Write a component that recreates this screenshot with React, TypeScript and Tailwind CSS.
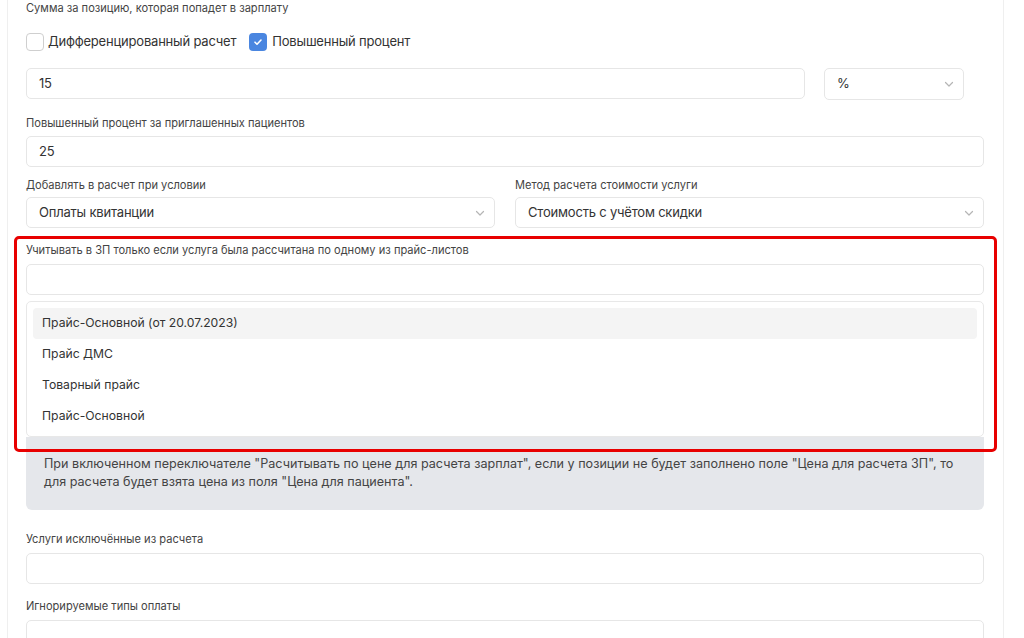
import React from 'react';

const Chevron: React.FC = () => (
  <svg width="12" height="12" viewBox="0 0 12 12" fill="none" className="text-[#b5b5b5]">
    <path d="M2.5 4.5L6 8l3.5-3.5" stroke="currentColor" strokeWidth="1.2" strokeLinecap="round" strokeLinejoin="round" />
  </svg>
);

const Label: React.FC<{ children: React.ReactNode; className?: string }> = ({ children, className = '' }) => (
  <div className={`text-[11.1px] leading-4 text-[#444] ${className}`}>{children}</div>
);

const Input: React.FC<{ value?: string; className?: string }> = ({ value, className = '' }) => (
  <div
    className={`h-[31px] rounded-[5px] border border-[#e6e6e6] bg-white px-[12px] flex items-center text-[13px] tracking-[-0.2px] text-[#333] ${className}`}
  >
    {value}
  </div>
);

const Select: React.FC<{ value: string; className?: string }> = ({ value, className = '' }) => (
  <div
    className={`h-[31px] rounded-[5px] border border-[#e6e6e6] bg-white pl-[12px] pr-[8px] flex items-center justify-between text-[13px] tracking-[-0.2px] text-[#333] ${className}`}
  >
    <span>{value}</span>
    <Chevron />
  </div>
);

const priceLists = ['Прайс-Основной (от 20.07.2023)', 'Прайс ДМС', 'Товарный прайс', 'Прайс-Основной'];

export default function App() {
  return (
    <div className="relative h-[638px] w-full overflow-hidden bg-white" style={{ fontFamily: 'Inter, "Noto Sans", sans-serif' }}>
      <div className="ml-[7px] mr-[20px] h-full border-x border-[#efefef] pl-[18px] pr-[19px]">
        <Label>Сумма за позицию, которая попадет в зарплату</Label>

        <div className="mt-[16px] flex h-[20px] items-center text-[13px] tracking-[-0.2px] text-[#333]">
          <span className="h-[18px] w-[18px] rounded-[4px] border border-[#cfcfcf] bg-white" />
          <span className="ml-[4px]">Дифференцированный расчет</span>
          <span className="ml-[13px] flex h-[18px] w-[18px] items-center justify-center rounded-[4px] bg-[#4a86e0]">
            <svg width="10" height="10" viewBox="0 0 10 10" fill="none">
              <path d="M2 5.2l2 2L8 3" stroke="white" strokeWidth="1.6" strokeLinecap="round" strokeLinejoin="round" />
            </svg>
          </span>
          <span className="ml-[5px]">Повышенный процент</span>
        </div>

        <div className="mt-[16px] flex items-start">
          <Input value="15" className="w-[779px]" />
          <Select value="%" className="ml-[19px] h-[32px] w-[140px]" />
        </div>

        <Label className="mt-[15px]">Повышенный процент за приглашенных пациентов</Label>
        <Input value="25" className="mt-[5px]" />

        <div className="mt-[10px] grid grid-cols-2 gap-x-[20px]">
          <div>
            <Label>Добавлять в расчет при условии</Label>
            <Select value="Оплаты квитанции" className="mt-[4px]" />
          </div>
          <div>
            <Label>Метод расчета стоимости услуги</Label>
            <Select value="Стоимость с учётом скидки" className="mt-[4px]" />
          </div>
        </div>

        <Label className="mt-[14px]">Учитывать в ЗП только если услуга была рассчитана по одному из прайс-листов</Label>
        <Input className="mt-[6px]" />

        <div className="relative z-10 mt-[6px] rounded-[5px] border border-[#e8e8e8] bg-white px-[6px] pt-[6px] pb-[4px]">
          {priceLists.map((item, index) => (
            <div
              key={item}
              className={`flex h-[31px] items-center rounded-[4px] px-[9px] text-[12.2px] text-[#333] ${index === 0 ? 'bg-[#f4f4f4]' : ''}`}
            >
              {item}
            </div>
          ))}
        </div>

        <div className="rounded-b-[6px] bg-[#e5e7eb] pl-[18px] pr-[18px] pt-[18px] pb-[19px] text-[12.6px] leading-[18px] text-[#444]">
          При включенном переключателе "Расчитывать по цене для расчета зарплат", если у позиции не будет заполнено поле
          "Цена для расчета ЗП", то для расчета будет взята цена из поля "Цена для пациента".
        </div>

        <Label className="mt-[21px]">Услуги исключённые из расчета</Label>
        <Input className="mt-[6px]" />

        <Label className="mt-[14px]">Игнорируемые типы оплаты</Label>
        <Input className="mt-[6px]" />
      </div>

      <div className="pointer-events-none absolute left-[14px] top-[236px] z-20 h-[216px] w-[983px] rounded-[5px] border-[3px] border-[#e80000]" />
    </div>
  );
}
